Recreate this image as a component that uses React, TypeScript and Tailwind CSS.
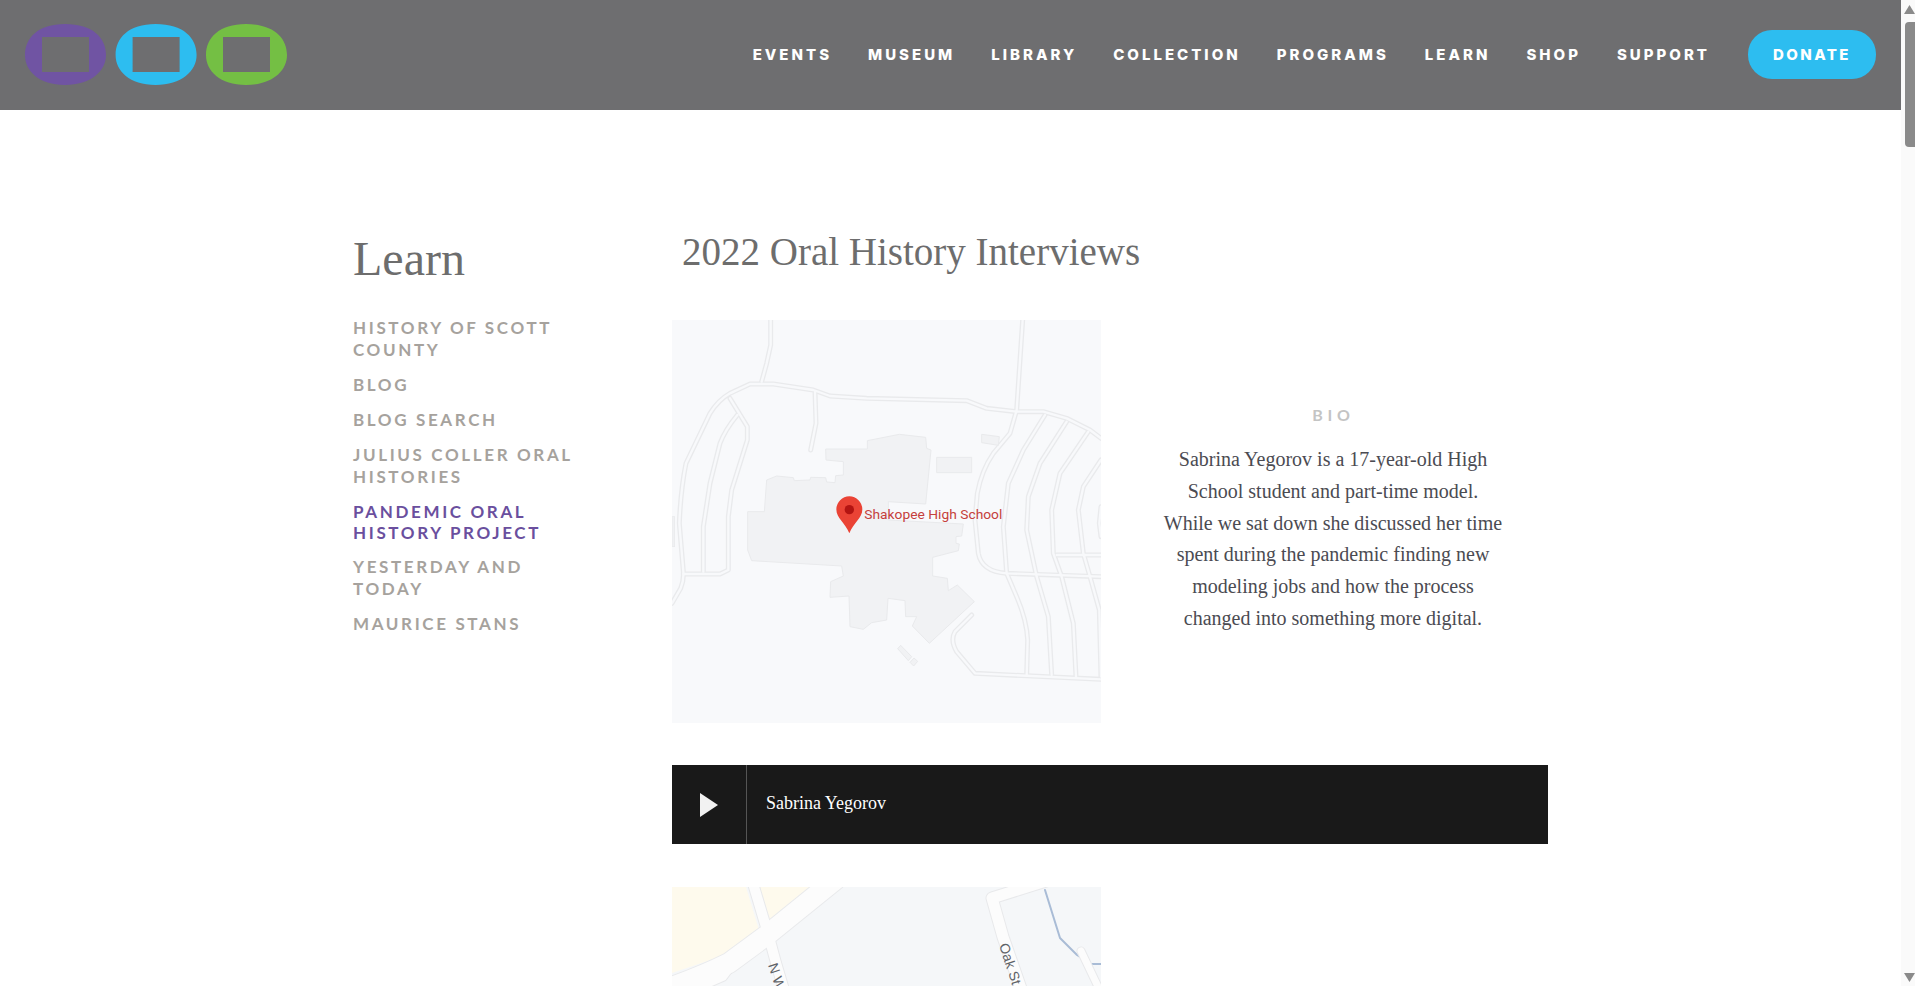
const nav = ["EVENTS", "MUSEUM", "LIBRARY", "COLLECTION", "PROGRAMS", "LEARN", "SHOP", "SUPPORT"];

function Logo() {
  const ovals: [number, string][] = [
    [0, "#7054a3"],
    [90.6, "#2dbdf0"],
    [181, "#74bf44"],
  ];
  return (
    <svg width="262" height="61" viewBox="0 0 262 61" className="mb-[1px] shrink-0">
      {ovals.map(([x, c]) => (
        <path
          key={c}
          transform={`translate(${x} 0)`}
          fill={c}
          fillRule="evenodd"
          d="M40 0C68 0 81 14 81 31C81 47 66 61 40 61C14 61 0 47 0 31C0 14 13 0 40 0ZM17 13V48H64V13Z"
        />
      ))}
    </svg>
  );
}

const roads = [
  "M36 880L62 835Q72 810 70 785L58 640Q62 540 78 460L150 310Q175 270 210 250L270 222H340L460 240L510 258L620 265L920 272L980 295L1070 305H1150L1220 325L1290 360L1323 385",
  "M332 30V105L320 160L305 215",
  "M465 245L468 340L452 420",
  "M1088 30L1070 300L1050 370L1000 430Q965 480 952 550L945 630L955 730Q965 785 1040 790L1323 800",
  "M210 265L262 350V390L215 540L205 620V780L180 792H70",
  "M232 315Q195 360 180 400L150 520L130 650V785",
  "M1155 315L1090 420L1045 520L1030 650L1040 790L1070 860Q1100 930 1103 990L1100 1095",
  "M1220 335L1140 460L1105 560L1100 660L1130 800L1165 920L1175 1095",
  "M1285 365L1200 490L1175 600L1180 730L1205 800L1240 940L1248 1100",
  "M1323 450L1270 530L1255 600L1270 730L1290 800L1318 900L1323 1100",
  "M1190 735H1323",
  "M935 915L885 965Q870 990 890 1025L945 1090L1323 1108",
  "M1323 590L1318 640L1323 680",
];

function SchoolMap() {
  return (
    <svg width="429" height="403" viewBox="36 30 1287 1209" className="block shrink-0 bg-[#f8f9fb]">
      <rect x="36" y="620" width="8" height="90" fill="#f0f1f3" stroke="#e8e9eb" strokeWidth="2" />
      {roads.map((d) => (
        <path key={d} d={d} fill="none" stroke="#e9eaec" strokeWidth="15" strokeLinejoin="round" strokeLinecap="round" />
      ))}
      {roads.map((d) => (
        <path key={d} d={d} fill="none" stroke="#f8f9fb" strokeWidth="7" strokeLinejoin="round" strokeLinecap="round" />
      ))}
      <g fill="#f1f2f4" stroke="#e9eaec" strokeWidth="3">
        <path d="M263 605H313L320 510L350 498L400 503L403 512L450 510L452 502L497 503L500 516L525 518L527 497L550 495V455L498 450L497 417H622V392L718 373L797 382L800 415L813 420L797 582L685 575V630L910 642L905 678L888 680V700L898 702L895 722L818 742V798L862 805L865 842L892 825L943 875L808 1000L757 948L770 920H737L735 872L684 865L680 930L635 938L610 958L570 950L567 858L510 862L512 815L550 798L545 768L275 752L263 720Z" />
        <path d="M830 442H935V488H830Z" />
        <path d="M965 373L1018 380L1015 406L965 398Z" />
        <path d="M722 1006L755 1040L745 1052L713 1016Z" />
        <path d="M762 1044L773 1054L761 1068L750 1057Z" />
      </g>
      <path d="M568 670C555 638 529 625 529 598A39 39 0 0 1 607 598C607 625 581 638 568 670Z" fill="#ea4335" />
      <circle cx="568" cy="599" r="14" fill="#b31412" />
      <text x="613" y="627" fontSize="38" fill="#c5403c" textLength="414" lengthAdjust="spacingAndGlyphs" fontFamily="Roboto, sans-serif">
        Shakopee High School
      </text>
    </svg>
  );
}

function SecondMap() {
  return (
    <svg width="429" height="403" viewBox="672 887 429 403" className="block shrink-0 bg-[#f5f7f9]">
      <path d="M672 973L725 955L759 930L746 887H672Z" fill="#fefaed" />
      <path d="M757 887L769 923L812 887Z" fill="#fefaed" />
      <g fill="none" strokeLinecap="round" strokeLinejoin="round">
        <path d="M752 880L769 937L776 963L790 1010" stroke="#e8e9eb" strokeWidth="12" />
        <path d="M672 987Q705 975 729 963L767 935L835 880" stroke="#e9eaec" strokeWidth="22" />
        <path d="M692 992L724 978L730 970" stroke="#e8e9eb" strokeWidth="7" />
        <path d="M752 880L769 937L776 963L790 1010" stroke="#fcfcfc" strokeWidth="10" />
        <path d="M672 987Q705 975 729 963L767 935L835 880" stroke="#fcfcfc" strokeWidth="20" />
        <path d="M692 992L724 978L730 970" stroke="#fcfcfc" strokeWidth="5" />
        <path d="M1045 890L1060 938L1077 955L1091 964H1101" stroke="#a9bcd6" strokeWidth="2" />
        <path d="M1046 881L992 898L1003 937L1025 1000" stroke="#e8e9eb" strokeWidth="13" />
        <path d="M1046 881L992 898L1003 937L1025 1000" stroke="#fcfcfc" strokeWidth="11" />
        <path d="M1081 951L1102 995" stroke="#e8e9eb" strokeWidth="9" />
        <path d="M1081 951L1102 995" stroke="#fcfcfc" strokeWidth="7" />
      </g>
      <g fill="#5f6368" fontSize="14" fontFamily="'Liberation Sans', sans-serif">
        <text transform="translate(768 965) rotate(72)">N W</text>
        <text transform="translate(999 945) rotate(72)">Oak St</text>
      </g>
    </svg>
  );
}

const side: { lines: string[]; active?: boolean }[] = [
  { lines: ["HISTORY OF SCOTT", "COUNTY"] },
  { lines: ["BLOG"] },
  { lines: ["BLOG SEARCH"] },
  { lines: ["JULIUS COLLER ORAL", "HISTORIES"] },
  { lines: ["PANDEMIC ORAL", "HISTORY PROJECT"], active: true },
  { lines: ["YESTERDAY AND", "TODAY"] },
  { lines: ["MAURICE STANS"] },
];

const bio = [
  "Sabrina Yegorov is a 17-year-old High",
  "School student and part-time model.",
  "While we sat down she discussed her time",
  "spent during the pandemic finding new",
  "modeling jobs and how the process",
  "changed into something more digital.",
];

export default function App() {
  return (
    <div className="flex h-screen overflow-hidden bg-white font-['Liberation_Serif',serif]">
      <div className="flex min-w-0 flex-1 flex-col">
        <header className="flex h-[110px] shrink-0 items-center justify-between bg-[#6e6e70] pl-[25px] pr-[25px] font-['Inter',sans-serif]">
          <Logo />
          <nav className="mb-[1px] flex items-center gap-[36px] text-[15px] font-extrabold tracking-[0.2em] text-white">
            {nav.map((n) => (
              <span key={n} className="pt-[2px]">{n}</span>
            ))}
            <span className="ml-[2px] flex h-[49px] w-[128px] items-center justify-center rounded-[24px] bg-[#2dbdf0] pt-[2px] tracking-[0.16em]">DONATE</span>
          </nav>
        </header>
        <main className="flex pl-[353px]">
          <aside className="w-[319px] shrink-0 font-['Lato',sans-serif]">
            <h1 className="mt-[119px] text-[48px] leading-[60px] font-normal text-[#6d6d6d] font-['Liberation_Serif',serif]">Learn</h1>
            <ul className="mt-[28px] flex flex-col gap-[13px] text-[17px] leading-[22px] font-bold tracking-[0.155em]">
              {side.map((s) => (
                <li key={s.lines[0]} className={s.active ? "leading-[21px] text-[#6a4f9e]" : "text-[#a6a29d]"}>
                  {s.lines.map((l) => (
                    <div key={l} className="whitespace-nowrap">{l}</div>
                  ))}
                </li>
              ))}
            </ul>
          </aside>
          <section className="w-[876px] shrink-0">
            <h2 className="mt-[119px] ml-[10px] text-[39px] leading-[46px] font-normal text-[#6d6d6d]">2022 Oral History Interviews</h2>
            <div className="mt-[45px] flex">
              <SchoolMap />
              <div className="ml-[17px] flex w-[430px] flex-col items-center pt-[85px] text-center">
                <div className="pl-[1px] font-['Lato',sans-serif] text-[16px] leading-[20px] font-bold tracking-[0.3em] text-[#c4c4c4]">BIO</div>
                <div className="mt-[19px] text-[20px] leading-[31.8px] text-[#4b4b52]">
                  {bio.map((l) => (
                    <div key={l} className="whitespace-nowrap">{l}</div>
                  ))}
                </div>
              </div>
            </div>
            <div className="mt-[42px] flex h-[79px] w-[876px] items-center bg-[#191919]">
              <div className="flex h-full w-[75px] items-center justify-center border-r border-[#555555]">
                <svg width="18" height="24" viewBox="0 0 18 24">
                  <path d="M0 0L18 12L0 24Z" fill="#f2f2f2" />
                </svg>
              </div>
              <div className="mb-[2px] ml-[19px] text-[18px] font-medium text-white">Sabrina Yegorov</div>
            </div>
            <div className="mt-[43px]">
              <SecondMap />
            </div>
          </section>
        </main>
      </div>
      <div className="relative flex h-full w-[14px] shrink-0 flex-col items-end bg-[#fafafa]">
        <svg width="11" height="9" viewBox="0 0 11 9" className="mt-[5px] shrink-0">
          <path d="M5.5 0L11 9H0Z" fill="#8a8a8a" />
        </svg>
        <div className="mt-[8px] h-[125px] w-[10px] rounded-l-[4px] bg-[#8a8a8a]" />
        <svg width="11" height="9" viewBox="0 0 11 9" className="mt-auto mb-[4px] shrink-0">
          <path d="M0 0H11L5.5 9Z" fill="#8a8a8a" />
        </svg>
      </div>
    </div>
  );
}
